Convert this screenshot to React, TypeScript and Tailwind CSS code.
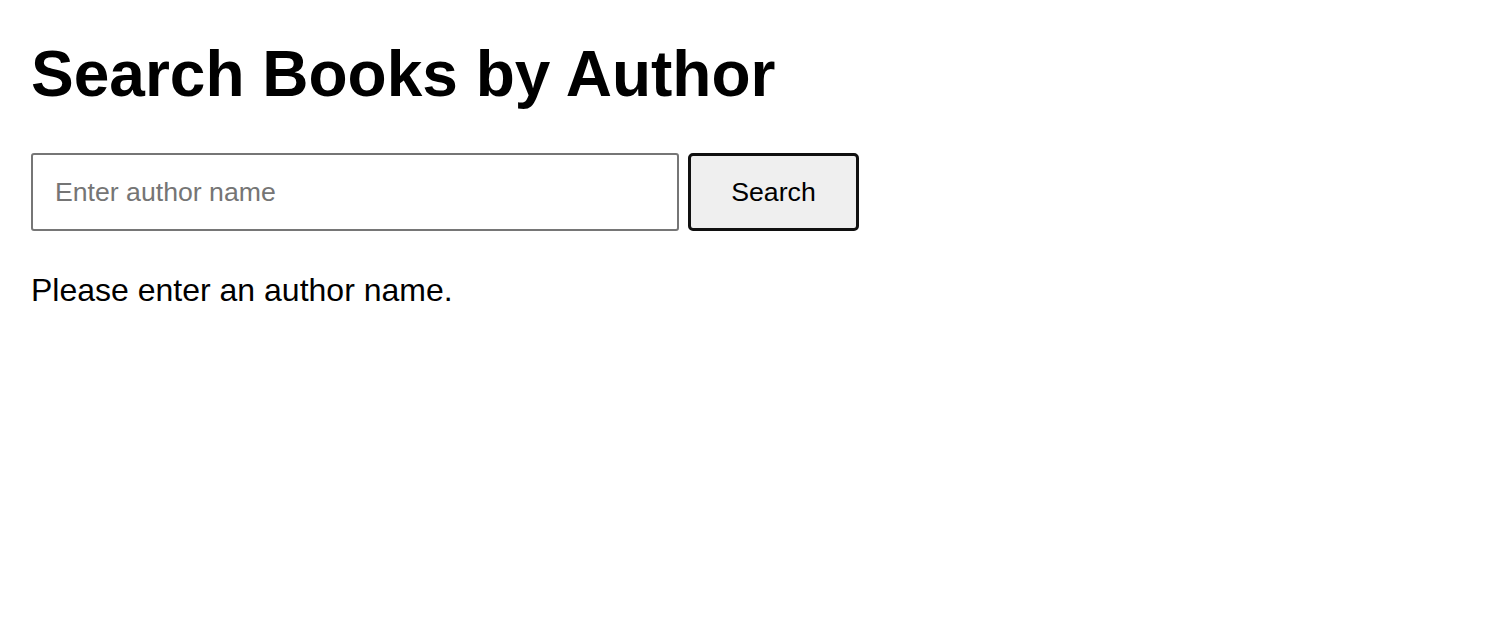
import { useState } from "react"

const App = () => {
    const [author, setAuthor] = useState("")
    const [message, setMessage] = useState("Please enter an author name.")

    const onSearch = () => {
        if (!author.trim()) {
            setMessage("Please enter an author name.")
            return
        }
        setMessage(`Searching for books by ${author}...`)
    }

    return (
        <div className="min-h-screen bg-white px-[31px] pt-[37px] text-black" style={{ fontFamily: '"Liberation Sans", Arial, sans-serif' }}>
            <h1 className="text-[64px] font-bold leading-[74px]">Search Books by Author</h1>
            <div className="mt-[42px] flex items-stretch gap-[9px]">
                <input
                    type="text"
                    value={author}
                    onChange={(e) => setAuthor(e.target.value)}
                    placeholder="Enter author name"
                    className="h-[78px] w-[648px] rounded-[3px] border-2 border-[#767676] bg-white px-[22px] text-[26.67px] text-black outline-none placeholder:text-[#757575]"
                />
                <button
                    onClick={onSearch}
                    className="h-[78px] w-[171px] rounded-[5px] border-[3px] border-[#101010] bg-[#efefef] text-[26.67px] text-black"
                >
                    Search
                </button>
            </div>
            <p className="mt-[41px] text-[32px] leading-[37px]">{message}</p>
        </div>
    )
}

export default App
